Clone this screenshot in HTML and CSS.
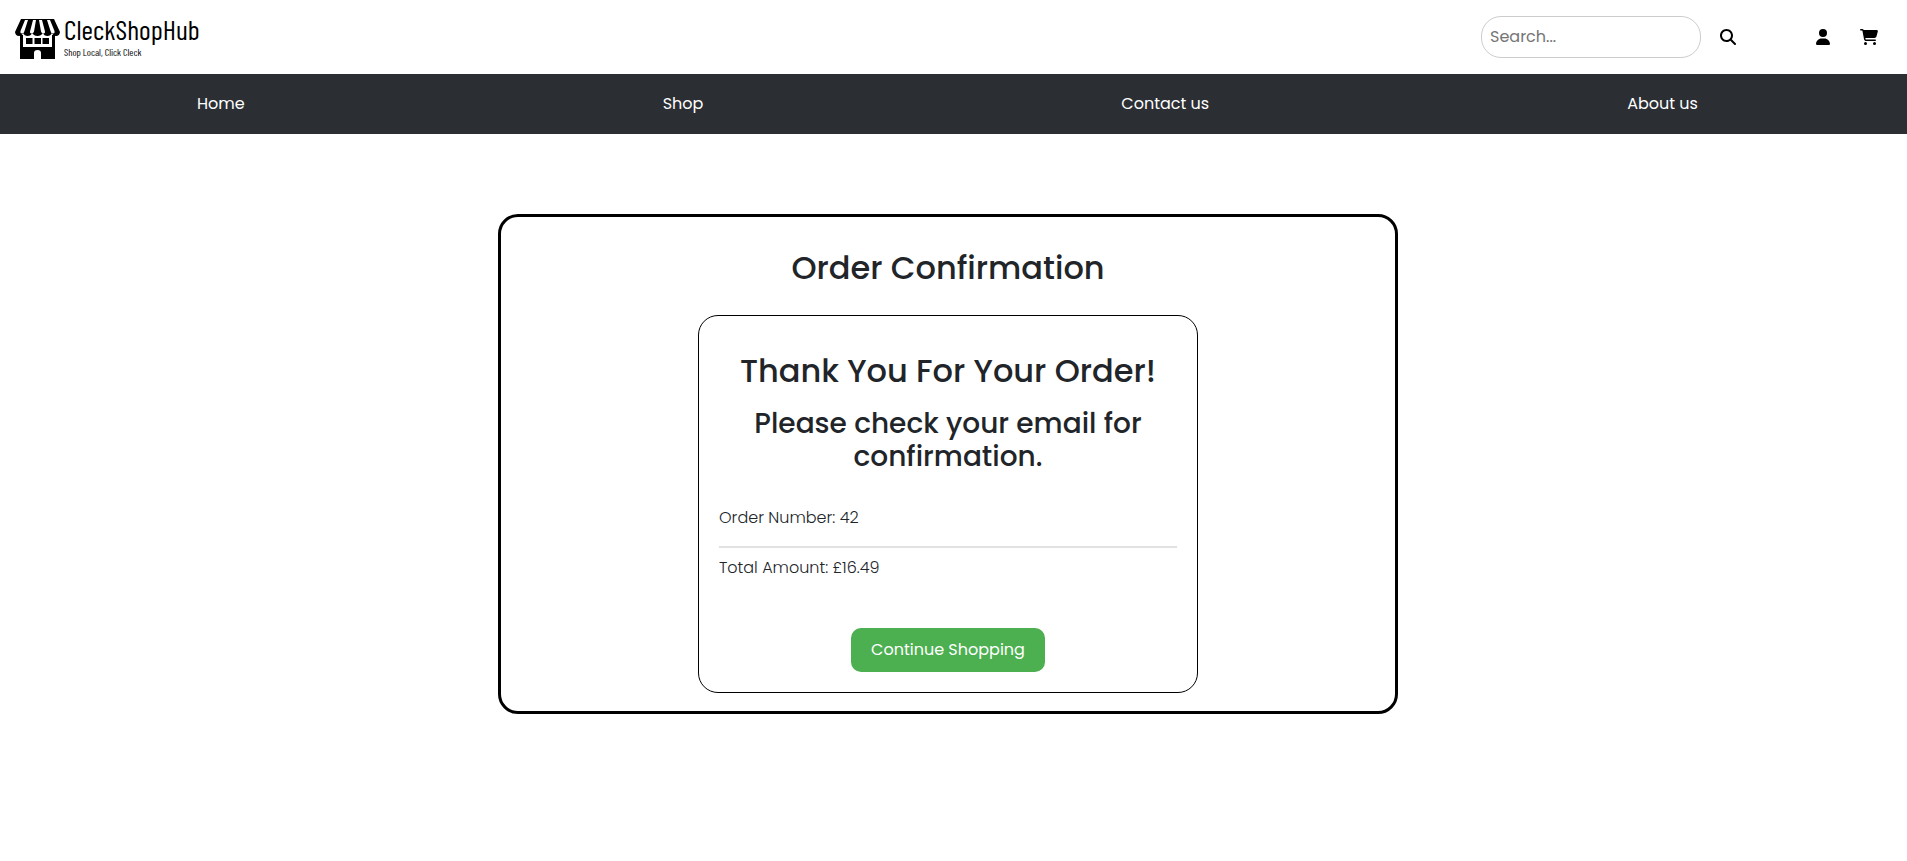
FILE: index.html
```html
<!DOCTYPE html>
<html lang="en">
<head>
<meta charset="utf-8">
<meta name="viewport" content="width=device-width, initial-scale=1">
<title>CleckShopHub - Order Confirmation</title>
<link rel="stylesheet" href="styles.css">
</head>
<body>
<header class="topbar">
  <a class="brand" href="#">
    <svg class="brand-icon" viewBox="0 0 45 40" aria-hidden="true">
      <path d="M6 0H39L45 13Q44.500 17 41 17Q38 17 37 14Q35.500 17 32.500 17Q29 17 28 14Q26 17 22.500 17Q19 17 17 14Q16 17 12.500 17Q9.500 17 8 14Q7 17 4 17Q.5 17 0 13Z"/>
      <path d="M5 16H8V28H37V16H40V40H26V34Q26 31 22.500 31Q19 31 19 34V40H5Z"/>
      <path d="M11 19H17.500V25H11ZM19.500 19H26V25H19.500ZM27.500 19H34V25H27.500Z"/>
      <path fill="#fff" d="M10 1H13L9.500 12Q9 14.500 7 14.500Q5 14.500 5.500 12ZM18 1H21L19 12.500Q18.500 14.500 16.500 14.500Q14.500 14.500 15 12.500ZM24 1H27L30 12.500Q30.500 14.500 28.500 14.500Q26.500 14.500 26 12.500ZM32 1H35L39.500 12Q40 14.500 38 14.500Q36 14.500 35.500 12Z"/>
    </svg>
    <span class="brand-text">
      <span class="brand-name">CleckShopHub</span>
      <span class="brand-tag">Shop Local, Click Cleck</span>
    </span>
  </a>
  <div class="tools">
    <form class="search" role="search">
      <input class="search-input" type="search" placeholder="Search..." aria-label="Search">
      <button class="icon-button" type="button" aria-label="Search">
        <svg class="icon" viewBox="0 0 512 512"><path d="M416 208c0 45.900-14.900 88.300-40 122.700L502.600 457.400c12.500 12.500 12.500 32.800 0 45.300s-32.800 12.500-45.300 0L330.700 376c-34.400 25.200-76.800 40-122.700 40C93.100 416 0 322.900 0 208S93.100 0 208 0S416 93.100 416 208zM208 352a144 144 0 1 0 0-288 144 144 0 1 0 0 288z"/></svg>
      </button>
    </form>
    <a class="icon-link" href="#" aria-label="Account"><svg class="icon" viewBox="0 0 448 512"><path d="M224 256A128 128 0 1 0 224 0a128 128 0 1 0 0 256zm-45.700 48C79.800 304 0 383.800 0 482.300C0 498.700 13.300 512 29.700 512H418.300c16.400 0 29.700-13.300 29.700-29.700C448 383.800 368.200 304 269.700 304H178.300z"/></svg></a>
    <a class="icon-link" href="#" aria-label="Cart"><svg class="icon" viewBox="0 0 576 512"><path d="M0 24C0 10.700 10.700 0 24 0H69.500c22 0 41.500 12.800 50.600 32h411c26.300 0 45.500 25 38.600 50.400l-41 152.300c-8.500 31.400-37 53.300-69.500 53.300H170.700l5.400 28.500c2.200 11.300 12.100 19.500 23.600 19.500H488c13.300 0 24 10.700 24 24s-10.700 24-24 24H199.700c-34.600 0-64.300-24.600-70.700-58.500L77.400 54.500c-.7-3.800-4-6.500-7.900-6.500H24C10.700 48 0 37.300 0 24zM128 464a48 48 0 1 1 96 0 48 48 0 1 1 -96 0zm336-48a48 48 0 1 1 0 96 48 48 0 1 1 0-96z"/></svg></a>
  </div>
</header>
<nav class="navbar" aria-label="Main">
  <ul class="nav-list">
    <li><a class="nav-link" href="#">Home</a></li>
    <li><a class="nav-link" href="#">Shop</a></li>
    <li><a class="nav-link" href="#">Contact us</a></li>
    <li><a class="nav-link" href="#">About us</a></li>
  </ul>
</nav>
<main class="page">
  <section class="panel">
    <h1 class="title">Order Confirmation</h1>
    <div class="receipt">
      <h2 class="title">Thank You For Your Order!</h2>
      <h3 class="subtitle">Please check your email for confirmation.</h3>
      <div class="details">
        <p class="detail">Order Number: 42</p>
        <p class="detail">Total Amount: £16.49</p>
      </div>
      <button class="continue" type="button">Continue Shopping</button>
    </div>
  </section>
</main>
</body>
</html>
```
FILE: styles.css
```css
* {
  box-sizing: border-box;
}

body {
  margin: 0;
  background: #fff;
  color: #212529;
  font-family: Poppins, Inter, sans-serif;
  font-size: 16px;
  line-height: 24px;
}

a {
  color: inherit;
  text-decoration: none;
}

h1, h2, h3, p, ul {
  margin: 0;
  padding: 0;
}

.topbar {
  display: flex;
  justify-content: space-between;
  align-items: flex-start;
  padding: 16px 29px 15px 15px;
}

.brand {
  display: flex;
  align-items: center;
  gap: 4px;
  padding-top: 3px;
  color: #000;
  font-family: "Barlow Condensed", "Liberation Sans Narrow", sans-serif;
}

.brand-icon {
  width: 45px;
  height: 40px;
}

.brand-text {
  display: flex;
  flex-direction: column;
  gap: 6px;
}

.brand-name {
  font-size: 28px;
  line-height: 20px;
}

.brand-tag {
  font-size: 10px;
  line-height: 14px;
}

.tools,
.search {
  display: flex;
  align-items: center;
}

.tools {
  gap: 30px;
}

.search {
  gap: 19px;
  margin-right: 50px;
}

.search-input {
  width: 220px;
  height: 42px;
  padding: 7px 8px 9px;
  border: 1px solid #ccc;
  border-radius: 20px;
  background: #fff;
  font: inherit;
}

.search-input::placeholder {
  color: #757575;
}

.icon-button {
  display: flex;
  padding: 0;
  border: 0;
  background: none;
}

.icon-link {
  display: flex;
}

.icon {
  display: block;
  height: 16px;
}

.navbar {
  background: #2b2e33;
}

.nav-list {
  display: flex;
  justify-content: space-around;
  margin-left: -12px;
  padding: 18px 0;
  list-style: none;
}

.nav-link {
  color: #fff;
}

.page {
  padding: 80px 11px 80px 0;
}

.panel {
  max-width: 900px;
  margin: 0 auto;
  padding: 32px 20px 18px;
  border: 3px solid #000;
  border-radius: 20px;
}

.title,
.subtitle {
  font-weight: 500;
  text-align: center;
}

.title {
  font-size: 32px;
  line-height: 38px;
}

.receipt {
  max-width: 500px;
  margin: 28px auto 0;
  padding: 36px 20px 20px;
  border: 1px solid #000;
  border-radius: 20px;
}

.subtitle {
  margin-top: 17px;
  font-size: 28px;
  line-height: 33px;
}

.details {
  margin: 23px 0 38px;
}

.detail {
  padding: 10px 0 16px;
  font-weight: 300;
}

.detail + .detail {
  padding: 8px 0 10px;
  border-top: 2px solid #e2e2e2;
}

.continue {
  display: block;
  margin: 0 auto;
  padding: 10px 20px;
  border: 0;
  border-radius: 10px;
  background: #4caf50;
  color: #fff;
  font: inherit;
}
```
